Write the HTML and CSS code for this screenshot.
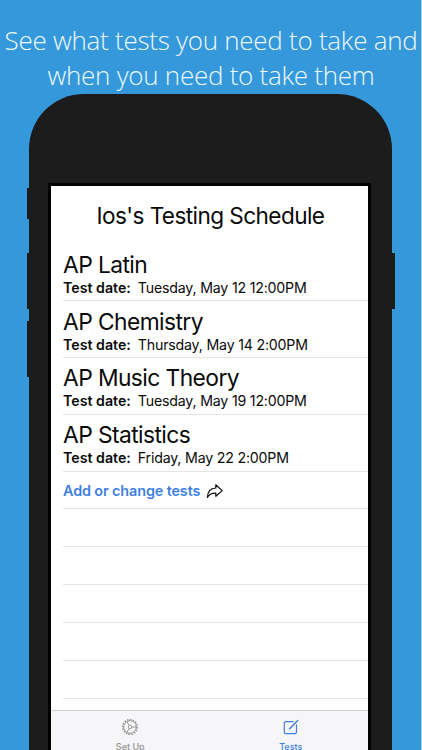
FILE: index.html
```html
<!DOCTYPE html>
<html lang="en">
<head>
    <meta charset="UTF-8">
    <meta name="viewport" content="width=device-width, initial-scale=1.0">
    <title>Testing Schedule</title>
    <link rel="stylesheet" href="styles.css">
</head>
<body>
    <h1 class="headline">See what tests you need to take and<br>when you need to take them</h1>

    <div class="phone">
        <!-- side buttons -->
        <span class="button mute"></span>
        <span class="button volume-up"></span>
        <span class="button volume-down"></span>
        <span class="button power"></span>

        <div class="screen">
            <h2 class="title">Ios's Testing Schedule</h2>

            <ul class="list">
                <li class="test">
                    <div class="name">AP Latin</div>
                    <div class="date"><b>Test date:</b><span>Tuesday, May 12 12:00PM</span></div>
                </li>
                <li class="test">
                    <div class="name">AP Chemistry</div>
                    <div class="date"><b>Test date:</b><span>Thursday, May 14 2:00PM</span></div>
                </li>
                <li class="test">
                    <div class="name">AP Music Theory</div>
                    <div class="date"><b>Test date:</b><span>Tuesday, May 19 12:00PM</span></div>
                </li>
                <li class="test">
                    <div class="name">AP Statistics</div>
                    <div class="date"><b>Test date:</b><span>Friday, May 22 2:00PM</span></div>
                </li>
                <li class="row">
                    <a class="change">Add or change tests</a>
                    <svg class="share" width="18" height="16" viewBox="0 0 18 16">
                        <path d="M9.8 1.8 L16.2 7.6 L9.8 13.2 V10.2 C6 10 3.4 11 1.4 14.4 C1.5 8.9 4.5 5.4 9.8 5 Z" fill="none" stroke="#111" stroke-width="1.25" stroke-linejoin="round"/>
                    </svg>
                </li>
                <li class="row"></li>
                <li class="row"></li>
                <li class="row"></li>
                <li class="row"></li>
                <li class="row"></li>
            </ul>

            <div class="tabs">
                <div class="tab">
                    <svg width="18" height="18" viewBox="0 0 18 18" fill="none" stroke="#929292">
                        <circle cx="9" cy="9" r="7.4" stroke-width="1.3" stroke-dasharray="1.6 1.27"/>
                        <circle cx="9" cy="9" r="6.3" stroke-width="1"/>
                        <circle cx="9" cy="9" r="1.7" stroke-width="0.9"/>
                        <path d="M10.7 9 H15.3 M8.1 7.5 L5.8 3.5 M8.1 10.5 L5.8 14.5" stroke-width="0.9"/>
                    </svg>
                    <span>Set Up</span>
                </div>
                <div class="tab active">
                    <svg width="18" height="18" viewBox="0 0 18 18" fill="none" stroke="#3f7fe0" stroke-width="1.2" stroke-linecap="round" stroke-linejoin="round">
                        <path d="M11.2 3.7 H3.9 Q2.3 3.7 2.3 5.3 V14.1 Q2.3 15.7 3.9 15.7 H12.9 Q14.5 15.7 14.5 14.1 V6.8"/>
                        <path d="M7.5 10.8 L14.5 3.8" stroke-width="1.5"/>
                        <path d="M15.4 2.9 L15.7 2.6" stroke-width="1.5"/>
                    </svg>
                    <span>Tests</span>
                </div>
            </div>
        </div>
    </div>
</body>
</html>
```
FILE: styles.css
```css
*{
    margin: 0;
    padding: 0;
    box-sizing: border-box;
}

html, body{
    height: 750px;
    overflow: hidden;
}
body{
    width: 422px;
    background-color: #3598db;
    border-right: 1px solid #a5d1ef;
    font-family: Inter, "Liberation Sans", sans-serif;
    color: #0a0a0a;
}
.headline{
    height: 94px;
    padding: 23px 0 0 1px;
    font-family: "Open Sans", sans-serif;
    font-size: 26px;
    font-weight: 300;
    line-height: 35px;
    letter-spacing: -0.27px;
    text-align: center;
    white-space: nowrap;
    color: #ecf9ff;
}
.phone{
    position: relative;
    width: 363px;
    height: 656px;
    margin-left: 29px;
    padding: 89px 21px 0 19px;
    background-color: #1c1c1c;
    border-radius: 55px 55px 0 0;
}
.button{
    position: absolute;
    left: -2px;
    width: 4px;
    height: 56px;
    background-color: #1c1c1c;
}
.mute{
    top: 94px;
    height: 31px;
}
.volume-up{
    top: 159px;
}
.volume-down{
    top: 227px;
}
.power{
    top: 159px;
    left: auto;
    right: -3px;
}
.screen{
    height: 567px;
    border: 3px solid #000;
    border-bottom: 0;
    background-color: #fff;
    overflow: hidden;
}
.title{
    height: 58.6px;
    padding: 15px 0 0 2px;
    font-size: 22.6px;
    font-weight: 400;
    line-height: 30px;
    letter-spacing: -0.58px;
    text-align: center;
    white-space: nowrap;
}
.list{
    height: 465.4px;
    padding-left: 12px;
    list-style: none;
    overflow: hidden;
}
.test{
    height: 56.75px;
    padding-top: 5.4px;
    border-bottom: 1px solid #e4e4e4;
    white-space: nowrap;
}
.name{
    font-size: 22.8px;
    line-height: 29px;
    letter-spacing: -0.58px;
}
.date{
    display: flex;
    gap: 7px;
    font-size: 14.2px;
    line-height: 17px;
}
.date b{
    font-weight: 600;
}
.date span{
    letter-spacing: -0.2px;
}
.row{
    display: flex;
    align-items: center;
    gap: 6px;
    height: 37.9px;
    padding-top: 1px;
    border-bottom: 1px solid #e4e4e4;
}
.change{
    font-size: 14.4px;
    font-weight: 600;
    letter-spacing: -0.12px;
    color: #3f7fe0;
}
.tabs{
    display: flex;
    height: 42px;
    border-top: 1px solid #d2d2d4;
    background-color: #f6f6f8;
}
.tab{
    display: flex;
    flex: 1;
    flex-direction: column;
    align-items: center;
    padding: 7px 0 0 2px;
    font-size: 9px;
    font-weight: 500;
    line-height: 12px;
    color: #929292;
}
.tab svg{
    flex-shrink: 0;
}
.tab span{
    margin-top: 5px;
}
.active{
    padding-left: 6px;
    color: #3f7fe0;
}
```
